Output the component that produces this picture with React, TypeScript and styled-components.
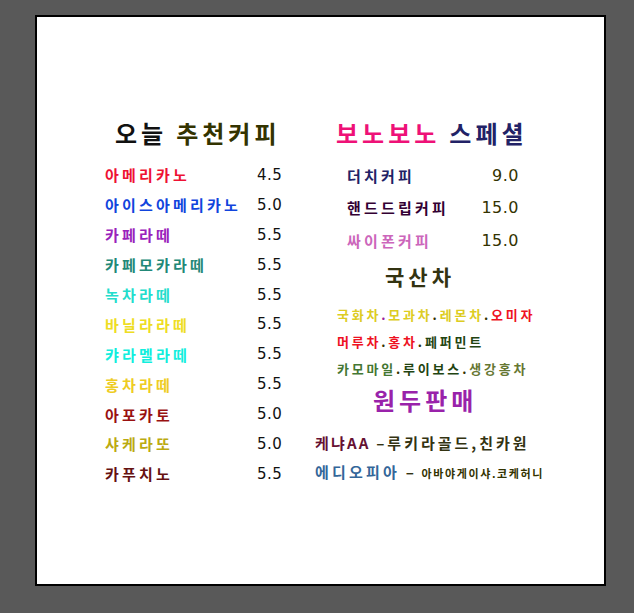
import React from "react";
import styled, { createGlobalStyle } from "styled-components";

const Global = createGlobalStyle`
  html, body { margin: 0; padding: 0; background: #595959; }
  body { font-family: "Noto Sans CJK KR", "Noto Sans", sans-serif; }
`;

const Page = styled.div`
  width: 634px;
  height: 613px;
  padding: 15px 0 0 35px;
  box-sizing: border-box;
`;

const Canvas = styled.div`
  width: 571px;
  height: 571px;
  box-sizing: border-box;
  border: 2px solid #000;
  background: #fff;
  display: flex;
  padding: 98px 0 0 68px;
`;

const LeftCol = styled.div`
  width: 210px;
  display: flex;
  flex-direction: column;
`;

const RightCol = styled.div`
  display: flex;
  flex-direction: column;
`;

const Title = styled.div<{ $indent: number }>`
  font-family: "Noto Sans CJK KR", sans-serif;
  font-weight: 700;
  font-size: 24px;
  line-height: 36px;
  height: 36px;
  letter-spacing: 4px;
  white-space: nowrap;
  padding-left: ${(p) => p.$indent}px;
`;

const Gap = styled.span<{ $w: number }>`
  display: inline-block;
  width: ${(p) => p.$w}px;
`;

const C = styled.span<{ $c: string; $size?: number; $ls?: number }>`
  color: ${(p) => p.$c};
  ${(p) => (p.$size ? `font-size: ${p.$size}px;` : "")}
  ${(p) => (p.$ls !== undefined ? `letter-spacing: ${p.$ls}px;` : "")}
`;

const LeftList = styled.div`
  margin-top: 9px;
  display: flex;
  flex-direction: column;
`;

const LeftRow = styled.div`
  display: grid;
  grid-template-columns: 152px auto;
  height: 29.9px;
  align-items: center;
`;

const Name = styled.span<{ $c: string }>`
  font-family: "Noto Sans CJK KR", sans-serif;
  font-weight: 700;
  font-size: 15px;
  letter-spacing: 3.2px;
  color: ${(p) => p.$c};
  white-space: nowrap;
`;

const Price = styled.span<{ $c?: string; $size?: number }>`
  font-family: "DejaVu Sans", sans-serif;
  font-size: ${(p) => p.$size ?? 15}px;
  letter-spacing: 0.5px;
  color: ${(p) => p.$c ?? "#111"};
`;

const SpecialList = styled.div`
  margin-top: 8px;
  padding-left: 32px;
  width: 172px;
  display: flex;
  flex-direction: column;
`;

const SpecialRow = styled.div`
  display: flex;
  justify-content: space-between;
  align-items: center;
  height: 32.5px;
`;

const SubTitle = styled.div<{ $c: string; $size: number; $indent: number; $h: number; $mt: number; $ls: number }>`
  font-family: "Noto Sans CJK KR", sans-serif;
  font-weight: 700;
  font-size: ${(p) => p.$size}px;
  letter-spacing: ${(p) => p.$ls}px;
  color: ${(p) => p.$c};
  line-height: ${(p) => p.$h}px;
  height: ${(p) => p.$h}px;
  padding-left: ${(p) => p.$indent}px;
  margin-top: ${(p) => p.$mt}px;
  white-space: nowrap;
`;

const TeaList = styled.div`
  margin-top: 10px;
  padding-left: 22px;
  display: flex;
  flex-direction: column;
`;

const TeaLine = styled.div`
  font-family: "Noto Sans CJK KR", sans-serif;
  font-weight: 700;
  font-size: 13px;
  letter-spacing: 2.8px;
  line-height: 27px;
  height: 27px;
  white-space: nowrap;
`;

const BeanList = styled.div`
  margin-top: 10px;
  display: flex;
  flex-direction: column;
`;

const BeanLine = styled.div`
  font-family: "Noto Sans CJK KR", sans-serif;
  font-weight: 700;
  font-size: 15px;
  letter-spacing: 2.2px;
  line-height: 29px;
  height: 29px;
  white-space: nowrap;
`;

const leftItems: [string, string, string][] = [
  ["아메리카노", "#ee1133", "4.5"],
  ["아이스아메리카노", "#1144dd", "5.0"],
  ["카페라떼", "#9922bb", "5.5"],
  ["카페모카라떼", "#228877", "5.5"],
  ["녹차라떼", "#22ddcc", "5.5"],
  ["바닐라라떼", "#eedd22", "5.5"],
  ["캬라멜라떼", "#11eedd", "5.5"],
  ["홍차라떼", "#eecc22", "5.5"],
  ["아포카토", "#991111", "5.0"],
  ["샤케라또", "#bbaa11", "5.0"],
  ["카푸치노", "#661111", "5.5"],
];

const specials: [string, string, string][] = [
  ["더치커피", "#222266", "9.0"],
  ["핸드드립커피", "#330033", "15.0"],
  ["싸이폰커피", "#cc66bb", "15.0"],
];

export default function App() {
  return (
    <>
      <Global />
      <Page>
        <Canvas>
          <LeftCol>
            <Title $indent={10}>
              <C $c="#111">오늘</C>
              <Gap $w={9} />
              <C $c="#333300">추천커피</C>
            </Title>
            <LeftList>
              {leftItems.map(([n, c, p]) => (
                <LeftRow key={n}>
                  <Name $c={c}>{n}</Name>
                  <Price>{p}</Price>
                </LeftRow>
              ))}
            </LeftList>
          </LeftCol>
          <RightCol>
            <Title $indent={21}>
              <C $c="#ee1177">보노보노</C>
              <Gap $w={9} />
              <C $c="#222266">스페셜</C>
            </Title>
            <SpecialList>
              {specials.map(([n, c, p]) => (
                <SpecialRow key={n}>
                  <Name $c={c}>{n}</Name>
                  <Price $c="#333300" $size={16}>{p}</Price>
                </SpecialRow>
              ))}
            </SpecialList>
            <SubTitle $c="#333311" $size={21} $ls={4} $indent={70} $h={30} $mt={4}>
              국산차
            </SubTitle>
            <TeaList>
              <TeaLine>
                <C $c="#ddcc22">국화차</C>
                <C $c="#992299">.</C>
                <C $c="#ddcc22">모과차</C>
                <C $c="#333300">.</C>
                <C $c="#ddcc22">레몬차</C>
                <C $c="#333300">.</C>
                <C $c="#ee1122">오미자</C>
              </TeaLine>
              <TeaLine>
                <C $c="#ee1122">머루차</C>
                <C $c="#333300">.</C>
                <C $c="#ee1122">홍차</C>
                <C $c="#333300">.</C>
                <C $c="#224411">페퍼민트</C>
              </TeaLine>
              <TeaLine>
                <C $c="#447733">카모마일</C>
                <C $c="#333300">.</C>
                <C $c="#224411">루이보스</C>
                <C $c="#333300">.</C>
                <C $c="#667733">생강홍차</C>
              </TeaLine>
            </TeaList>
            <SubTitle $c="#9922aa" $size={24} $ls={4} $indent={58} $h={36} $mt={0}>
              원두판매
            </SubTitle>
            <BeanList>
              <BeanLine>
                <C $c="#661133">케냐AA</C> <C $c="#333311" $ls={3}>–루키라골드,친카원</C>
              </BeanLine>
              <BeanLine>
                <C $c="#336699" $ls={3.2}>에디오피아</C> <C $c="#333311">–</C>{" "}
                <C $c="#333300" $size={11} $ls={1.6}>아바야게이샤.코케허니</C>
              </BeanLine>
            </BeanList>
          </RightCol>
        </Canvas>
      </Page>
    </>
  );
}
